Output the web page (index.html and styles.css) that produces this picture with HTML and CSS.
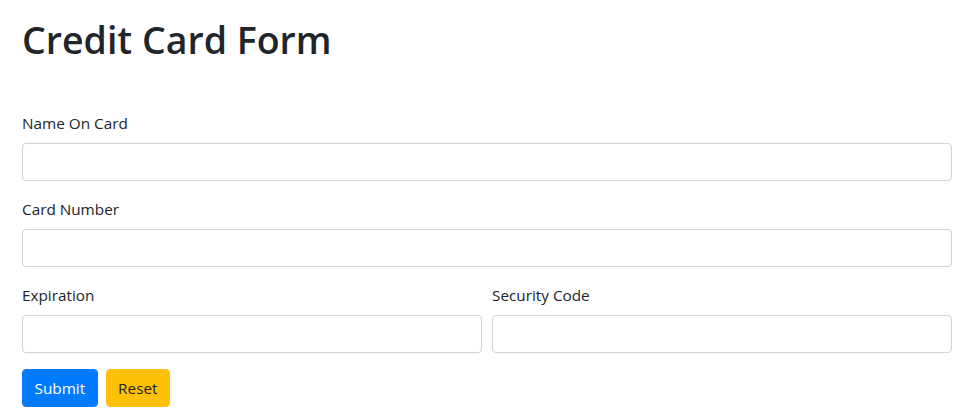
FILE: index.html
```html
<!DOCTYPE html>
<html lang="en">
<head>
<meta charset="utf-8">
<title>Credit Card Form</title>
<link rel="stylesheet" href="styles.css">
</head>
<body>
<div class="container">
  <h1 class="title">Credit Card Form</h1>
  <form class="form">
    <div class="form-group">
      <label class="label" for="name">Name On Card</label>
      <input class="input" id="name" type="text">
    </div>
    <div class="form-group">
      <label class="label" for="number">Card Number</label>
      <input class="input" id="number" type="text">
    </div>
    <div class="form-row">
      <div class="form-group col">
        <label class="label" for="exp">Expiration</label>
        <input class="input" id="exp" type="text">
      </div>
      <div class="form-group col">
        <label class="label" for="cvc">Security Code</label>
        <input class="input" id="cvc" type="text">
      </div>
    </div>
    <div class="actions">
      <button type="submit" class="btn btn-primary">Submit</button>
      <button type="reset" class="btn btn-warning">Reset</button>
    </div>
  </form>
</div>
</body>
</html>
```

FILE: styles.css
```css
* { box-sizing: border-box; }
html, body { margin: 0; padding: 0; }
body {
  font-family: "Open Sans", "Noto Sans", sans-serif;
  font-size: 15.3px;
  line-height: 24px;
  color: #212529;
  background: #fff;
}
.container {
  padding: 16px 26px 0 22px;
}
.title {
  margin: 0 0 47px 0;
  font-size: 37.5px;
  font-weight: 600;
  line-height: 48px;
}
.form-group {
  margin-bottom: 16px;
  display: flex;
  flex-direction: column;
}
.label {
  display: block;
  margin-bottom: 8px;
  line-height: 24px;
}
.input {
  display: block;
  width: 100%;
  height: 38px;
  padding: 6px 12px;
  font: inherit;
  color: #495057;
  background: #fff;
  border: 1px solid #ced4da;
  border-radius: 4px;
}
.form-row {
  display: flex;
  gap: 10px;
}
.col { flex: 1 1 0; min-width: 0; }
.actions {
  display: flex;
  gap: 8px;
  margin-top: 0;
}
.btn {
  font: inherit;
  height: 38px;
  padding: 6px 11.5px;
  border: 1px solid transparent;
  border-radius: 4px;
  line-height: 24px;
  cursor: pointer;
}
.btn-primary { background: #007bff; border-color: #007bff; color: #fff; }
.btn-warning { background: #ffc107; border-color: #ffc107; color: #212529; }
```
